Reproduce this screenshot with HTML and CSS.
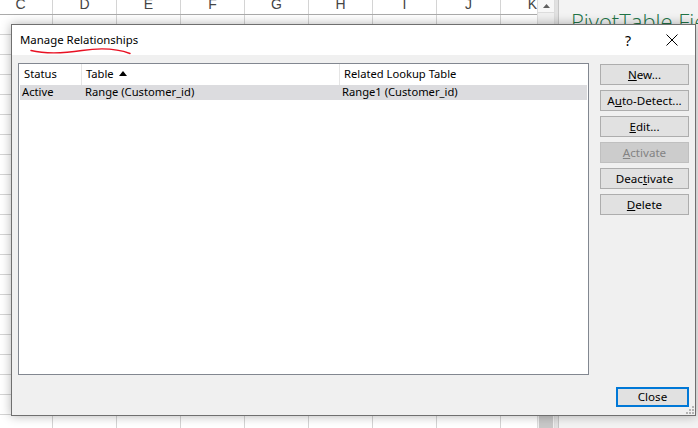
FILE: index.html
```html
<!DOCTYPE html>
<html lang="en">

<head>
    <meta charset="UTF-8">
    <title>Manage Relationships</title>
    <link rel="stylesheet" href="styles.css">
</head>

<body>
    <!-- Hoja de Excel de fondo -->
    <div class="sheet">
        <div class="grid">
            <div class="col-heads">
                <div class="col-head">C</div>
                <div class="col-head">D</div>
                <div class="col-head">E</div>
                <div class="col-head">F</div>
                <div class="col-head">G</div>
                <div class="col-head">H</div>
                <div class="col-head">I</div>
                <div class="col-head">J</div>
                <div class="col-head">K</div>
            </div>
            <div class="cells"></div>
        </div>
        <div class="vscroll">
            <div class="vscroll-up">
                <svg width="7" height="4" viewBox="0 0 7 4"><path d="M0 4 L3.5 0 L7 4 Z" fill="#606060"/></svg>
            </div>
            <div class="vscroll-track"></div>
            <div class="vscroll-thumb"></div>
        </div>
        <div class="split"></div>
        <div class="pane">
            <div class="pane-title">PivotTable Fields</div>
        </div>
    </div>

    <!-- Ventana de dialogo -->
    <div class="dialog">
        <div class="titlebar">
            <span class="title">Manage Relationships</span>
            <svg class="squiggle" width="102" height="8" viewBox="0 0 102 8">
                <path d="M1 2.5 C 16 6, 32 5.5, 52 2.5 S 88 1, 100 5.5" fill="none" stroke="#e81123" stroke-width="1.4" stroke-linecap="round"/>
            </svg>
            <span class="help">?</span>
            <svg class="close-x" width="12" height="12" viewBox="0 0 12 12">
                <path d="M0.5 0.5 L11.5 11.5 M11.5 0.5 L0.5 11.5" stroke="#000" stroke-width="1"/>
            </svg>
        </div>

        <div class="dialog-body">
            <div class="main">
                <div class="listbox">
                    <div class="list-head">
                        <div class="col col-status">Status</div>
                        <div class="col col-table">Table
                            <svg class="sort" width="8" height="5" viewBox="0 0 8 5"><path d="M0 5 L4 0 L8 5 Z" fill="#000"/></svg>
                        </div>
                        <div class="col col-related">Related Lookup Table</div>
                    </div>
                    <div class="list-row selected">
                        <div class="cell col-status">Active</div>
                        <div class="cell col-table">Range (Customer_id)</div>
                        <div class="cell col-related">Range1 (Customer_id)</div>
                    </div>
                </div>

                <div class="actions">
                    <button class="btn"><u>N</u>ew...</button>
                    <button class="btn">A<u>u</u>to-Detect...</button>
                    <button class="btn"><u>E</u>dit...</button>
                    <button class="btn" disabled><u>A</u>ctivate</button>
                    <button class="btn">Deac<u>t</u>ivate</button>
                    <button class="btn"><u>D</u>elete</button>
                </div>
            </div>

            <div class="footer">
                <button class="btn btn-default">Close</button>
            </div>
        </div>

        <svg class="grip" width="8" height="8" viewBox="0 0 8 8" fill="#b4b4b4">
            <rect x="6" y="0" width="2" height="2"/>
            <rect x="3" y="3" width="2" height="2"/>
            <rect x="6" y="3" width="2" height="2"/>
            <rect x="0" y="6" width="2" height="2"/>
            <rect x="3" y="6" width="2" height="2"/>
            <rect x="6" y="6" width="2" height="2"/>
        </svg>
    </div>
</body>

</html>
```

FILE: styles.css
```css
/* Estilos generales */
body {
    margin: 0;
    width: 698px;
    height: 428px;
    overflow: hidden;
    position: relative;
    background: #fff;
    font-family: 'Noto Sans', sans-serif;
    font-size: 11.2px;
    color: #000;
}

/* Hoja de Excel */
.sheet {
    display: flex;
    height: 428px;
}

.grid {
    width: 537px;
    overflow: hidden;
    display: flex;
    flex-direction: column;
}

.col-heads {
    display: flex;
    height: 14px;
    margin-left: -11px;
    border-bottom: 1px solid #ababab;
    background: #fff;
}

.col-head {
    flex: 0 0 64px;
    box-sizing: border-box;
    border-right: 1px solid #d4d4d4;
    text-align: center;
    font-family: 'Liberation Sans', sans-serif;
    font-size: 14px;
    line-height: 8px;
    color: #444;
}

.cells {
    flex: 1;
    background-image:
        linear-gradient(to right, transparent 52px, #d4d4d4 52px, #d4d4d4 53px, transparent 53px),
        linear-gradient(to bottom, transparent 19px, #d4d4d4 19px);
    background-size: 64px 20px;
    background-position: 0 0;
}

.vscroll {
    width: 16px;
    background: #f0f0f0;
    border-left: 1px solid #dcdcdc;
    border-right: 1px solid #dcdcdc;
    display: flex;
    flex-direction: column;
}

.vscroll-up {
    height: 12px;
    border-bottom: 1px solid #dcdcdc;
    background: #f7f7f7;
    display: flex;
    align-items: center;
    justify-content: center;
}

.vscroll-track {
    flex: 1;
}

.vscroll-thumb {
    height: 14px;
    margin: 0 1px;
    background: #c8c8c8;
}

.split {
    width: 3px;
    background: #e1e1e1;
    border-right: 1px solid #c6c6c6;
}

.pane {
    flex: 1;
    background: #f3f3f3;
    padding: 7px 0 0 12px;
    overflow: hidden;
}

/* solo se ve la parte superior, el resto queda bajo la ventana */
.pane-title {
    height: 17px;
    overflow: hidden;
    font-family: 'Open Sans', sans-serif;
    font-weight: 300;
    font-size: 22px;
    line-height: 28px;
    color: #217346;
    white-space: nowrap;
}

/* Ventana */
.dialog {
    position: absolute;
    left: 11px;
    top: 24px;
    width: 683px;
    height: 390px;
    border: 1px solid #6f6f6f;
    background: #f0f0f0;
    box-shadow: 0 0 10px rgba(0, 0, 0, 0.3);
    display: flex;
    flex-direction: column;
}

.titlebar {
    height: 30px;
    background: #fff;
    display: flex;
    align-items: center;
    padding-left: 8px;
    position: relative;
    font-size: 11.4px;
}

.title {
    flex: 1;
    margin-top: -2px;
}

.squiggle {
    position: absolute;
    left: 18px;
    top: 23px;
}

.help {
    font-size: 14px;
    margin-right: 35px;
}

.close-x {
    margin-right: 17px;
}

.dialog-body {
    flex: 1;
    padding: 8px 6px 8px 6px;
    display: flex;
    flex-direction: column;
}

.main {
    display: flex;
    gap: 11px;
}

.listbox {
    width: 569px;
    height: 310px;
    border: 1px solid #828790;
    background: #fff;
    padding: 0 1px;
}

.list-head {
    display: flex;
    height: 21px;
}

.list-head .col {
    box-sizing: border-box;
    padding-left: 4px;
    height: 21px;
    line-height: 20px;
    border-right: 1px solid #e5e5e5;
    display: flex;
    align-items: flex-start;
    gap: 5px;
}

.list-head .col-related {
    border-right: none;
}

.sort {
    margin-top: 7px;
}

.col-status {
    width: 62px;
}

.col-table {
    width: 258px;
}

.col-related {
    flex: 1;
}

.list-row {
    display: flex;
    height: 15px;
    line-height: 14px;
}

.list-row.selected {
    background: #dcdcdf;
}

.list-row .cell {
    box-sizing: border-box;
    padding-left: 2px;
}

.list-row .col-status {
    padding-left: 2px;
    width: 63px;
}

.list-row .col-table {
    width: 257px;
}

.actions {
    display: flex;
    flex-direction: column;
    gap: 5px;
    padding-top: 1px;
}

.btn {
    width: 89px;
    height: 21px;
    padding: 0 0 1px;
    border: 1px solid #adadad;
    background: #e1e1e1;
    font-family: 'Noto Sans', sans-serif;
    font-size: 11.6px;
    color: #000;
}

.btn u {
    text-underline-offset: 1px;
}

.btn:disabled {
    background: #cccccc;
    border-color: #bfbfbf;
    color: #838383;
}

.footer {
    margin-top: auto;
    display: flex;
    justify-content: flex-end;
}

.btn-default {
    width: 73px;
    height: 20px;
    border: 2px solid #0078d7;
}

.grip {
    position: absolute;
    right: 1px;
    bottom: 1px;
}
```
